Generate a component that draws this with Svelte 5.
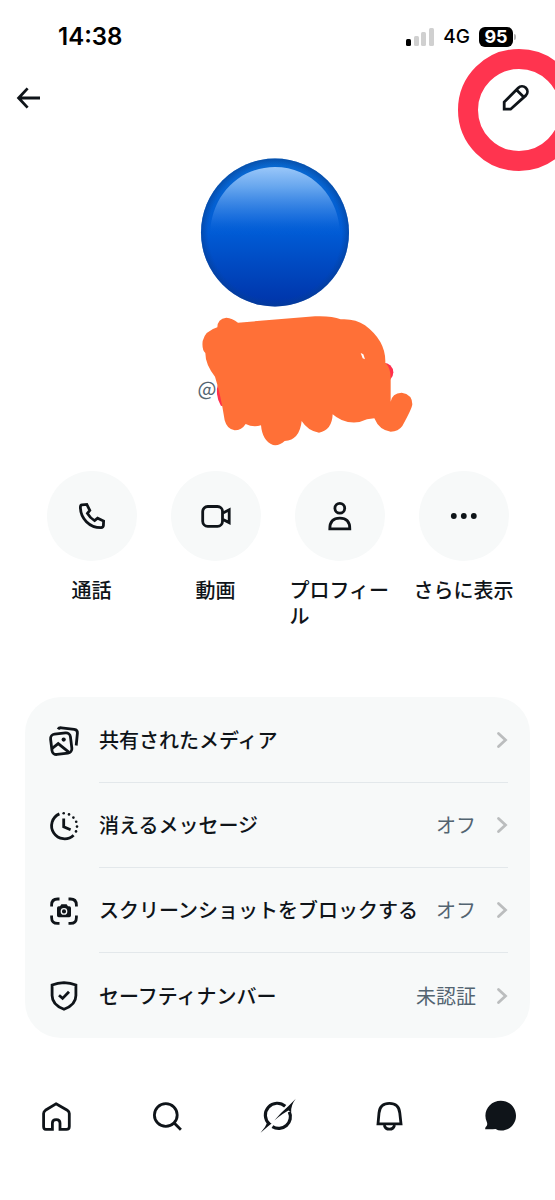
<script lang="ts">
  interface Action {
    icon: 'phone' | 'video' | 'person' | 'more';
    label: string;
  }

  interface Setting {
    icon: 'media' | 'timer' | 'screenshot' | 'shield';
    label: string;
    value?: string;
  }

  interface Tab {
    icon: 'home' | 'search' | 'grok' | 'bell' | 'chat';
    label: string;
  }

  const actions: Action[] = [
    { icon: 'phone', label: '通話' },
    { icon: 'video', label: '動画' },
    { icon: 'person', label: 'プロフィール' },
    { icon: 'more', label: 'さらに表示' }
  ];

  const settings: Setting[] = [
    { icon: 'media', label: '共有されたメディア' },
    { icon: 'timer', label: '消えるメッセージ', value: 'オフ' },
    { icon: 'screenshot', label: 'スクリーンショットをブロックする', value: 'オフ' },
    { icon: 'shield', label: 'セーフティナンバー', value: '未認証' }
  ];

  const tabs: Tab[] = [
    { icon: 'home', label: 'ホーム' },
    { icon: 'search', label: '検索' },
    { icon: 'grok', label: 'Grok' },
    { icon: 'bell', label: '通知' },
    { icon: 'chat', label: 'チャット' }
  ];
</script>

{#snippet icon(name: string)}
  <svg class="icon" viewBox="0 0 30 30" aria-hidden="true">
    {#if name === 'phone'}
      <path d="M5 3.8 L9.8 3.4 L12.8 9.4 L10.4 12.4 Q13 17 17.6 19.6 L20.6 17.2 L26.6 20 L26.4 24.7 Q26.2 26.6 24 26.7 C12.5 26.7 3.4 17.5 3.4 6 Q3.4 4 5 3.8 Z" />
    {:else if name === 'video'}
      <rect x="1.7" y="5.5" width="19.8" height="19.8" rx="5" />
      <path d="M22 12 L28.2 8.8 V21.6 L22 18.4" />
    {:else if name === 'person'}
      <circle cx="14.8" cy="7.2" r="4.9" />
      <path d="M4.8 27.8 C4.8 20.5 8.5 17.2 14.8 17.2 S24.8 20.5 24.8 27.8 Z" />
    {:else if name === 'more'}
      <g class="solid">
        <circle cx="4.8" cy="15" r="2.9" />
        <circle cx="14.8" cy="15" r="2.9" />
        <circle cx="24.8" cy="15" r="2.9" />
      </g>
    {:else if name === 'media'}
      <rect x="2.2" y="7.5" width="20" height="20.4" rx="4.5" transform="rotate(-7 12 17.5)" />
      <path d="M9 3.2 Q10 1.5 12.5 1.8 L25.2 3.3 Q28.7 3.8 28.4 7.2 L27.2 19.5" />
      <path d="M3.2 22.3 L9.2 17.6 L19.8 26.2" />
      <circle class="solid" cx="14.7" cy="13.6" r="2.1" />
    {:else if name === 'timer'}
      <path d="M10.4 2.9 A13 13 0 1 0 24.6 24.2" />
      <path d="M14.7 7.5 V15.8 L21.6 18.8" />
      <g class="solid">
        <circle cx="14.7" cy="2.2" r="1.3" />
        <circle cx="20" cy="3.4" r="1.3" />
        <circle cx="24.4" cy="6.6" r="1.3" />
        <circle cx="27.2" cy="10.8" r="1.3" />
        <circle cx="28" cy="15.6" r="1.3" />
        <circle cx="27" cy="20.4" r="1.3" />
      </g>
    {:else if name === 'screenshot'}
      <path d="M2.6 10.5 V9 Q2.6 3 8.6 3 H10.5 M19.5 3 H21.4 Q27.4 3 27.4 9 V10.5 M27.4 19.5 V21.4 Q27.4 27.4 21.4 27.4 H19.5 M10.5 27.4 H8.6 Q2.6 27.4 2.6 21.4 V19.5" />
      <path class="solid" d="M8 12 Q8 10.3 9.7 10.3 H11 L12.4 8.2 H17.6 L19 10.3 H20.3 Q22 10.3 22 12 V19.6 Q22 21.3 20.3 21.3 H9.7 Q8 21.3 8 19.6 Z" />
      <circle class="lens" cx="15" cy="15.4" r="2.7" />
    {:else if name === 'shield'}
      <path d="M15 1.6 Q21.5 1.8 26.9 4 V14.5 C26.9 21 22.5 25.5 15 28.2 C7.5 25.5 3.1 21 3.1 14.5 V4 Q8.5 1.8 15 1.6 Z" />
      <path d="M10 14.2 L13.6 17.4 L20 10.8" />
    {:else if name === 'home'}
      <path d="M15 2.8 L26.3 9.3 Q28.3 10.5 28.3 12.6 V25.4 Q28.3 28.3 25.4 28.3 H19 V22 Q19 18.6 15.2 18.6 T11.4 22 V28.3 H4.8 Q2.6 28.3 2.6 25.4 V12.6 Q2.6 10.5 4.4 9.3 Z" />
    {:else if name === 'search'}
      <circle cx="13.8" cy="14" r="11.4" />
      <path d="M22.2 22 L28.9 28.8" />
    {:else if name === 'grok'}
      <path class="ring-arc" d="M22.2 5.3 A11.7 11.7 0 0 0 6.3 23" />
      <path class="ring-arc" d="M26.3 10.8 A11.7 11.7 0 0 1 9.4 25.6" />
      <path class="solid" d="M32.8 -2.2 Q27.8 4 28.2 11 L25.4 9.6 Q20 12.4 11.3 19.4 Q18.5 11 25 5.5 Z" />
      <path class="solid" d="M-2.4 31.8 Q2.6 26.4 4.6 20.8 L8.6 22.4 Q4.6 25.4 -2.4 31.8 Z" />
    {:else if name === 'bell'}
      <path d="M4 22.8 L5 12 C5.6 5.5 9.6 2.4 15.4 2.4 S25.2 5.5 25.8 12 L27 22.8 Z" />
      <path d="M10.2 24 Q11.4 28.2 15.4 28.2 T20.6 24" />
    {:else if name === 'chat'}
      <path class="solid" d="M15.8 -0.3 C24.5 -0.3 31 6.4 31 14.8 S24.5 29.6 15.8 29.6 Q13 29.6 10.6 28 Q5.8 28.6 0.2 28.2 Q0 26.4 1.6 25 Q2.6 23.6 2 21.4 Q0.4 18.4 0.4 14.8 C0.4 6.4 7 -0.3 15.8 -0.3 Z" />
    {/if}
  </svg>
{/snippet}

<div class="screen">
  <div class="status-bar">
    <time>14:38</time>
    <div class="status-right">
      <svg class="signal" viewBox="0 0 28 18" aria-hidden="true">
        <rect x="0" y="11" width="5" height="7" rx="1.5" fill="#000" />
        <rect x="8" y="8" width="5" height="10" rx="1.5" />
        <rect x="15" y="4" width="5" height="14" rx="1.5" />
        <rect x="23" y="0" width="5" height="18" rx="1.5" />
      </svg>
      <span class="network">4G</span>
      <span class="battery">95</span>
    </div>
  </div>

  <header class="top-bar">
    <button class="icon-button" aria-label="戻る">
      <svg class="icon" viewBox="0 0 30 30" aria-hidden="true">
        <path d="M27 15 H5.6 M14.6 5.4 L5.6 15 L14.6 24.6" />
      </svg>
    </button>
    <button class="icon-button" aria-label="編集">
      <svg class="icon" viewBox="0 0 30 30" aria-hidden="true">
        <path d="M4.2 26.2 V19 L18.2 5 A5.3 5.3 0 0 1 25.9 12.4 L10.6 26.2 Z M16.6 7 L24 14.2" />
      </svg>
      <span class="highlight"></span>
    </button>
  </header>

  <main>
    <svg class="avatar" viewBox="1 0 152 150" role="img" aria-label="プロフィール画像">
      <defs>
        <linearGradient id="ball" x1="0" y1="0" x2="0" y2="1">
          <stop offset="0" stop-color="#0969cf" />
          <stop offset="0.5" stop-color="#005bd5" />
          <stop offset="1" stop-color="#0033a8" />
        </linearGradient>
        <radialGradient id="edge">
          <stop offset="0.9" stop-color="#06429c" stop-opacity="0" />
          <stop offset="1" stop-color="#063f91" stop-opacity="0.6" />
        </radialGradient>
        <linearGradient id="shine" x1="0" y1="0" x2="0" y2="1">
          <stop offset="0" stop-color="#9ac7f9" />
          <stop offset="0.3" stop-color="#65a5ee" />
          <stop offset="0.75" stop-color="#1c70df" stop-opacity="0.8" />
          <stop offset="1" stop-color="#005cd7" stop-opacity="0" />
        </linearGradient>
      </defs>
      <circle cx="74" cy="74.5" r="74" fill="url(#ball)" />
      <circle cx="74" cy="74.5" r="74" fill="url(#edge)" />
      <path d="M9 78 C9 38 38 9 74 9 S139 38 139 78 Z" fill="url(#shine)" />
    </svg>

    <div class="identity">
      <span class="handle">@</span>
      <svg class="scribble" viewBox="30 510 660 400" aria-hidden="true">
        <g fill="#ff2f4b">
          <circle cx="596" cy="684" r="29" />
          <path d="M100 715 Q88 750 108 785 L140 780 L120 700 Z" />
        </g>
        <path
          fill="#ff7037"
          d="M97 549 Q97 524 124 520 Q142 521 159 535 L390 516 Q440 514 467 525 Q510 522 540 543 Q603 590 601 655 Q617 670 617 700 V772 Q621 747 650 745 Q682 750 682 780 Q681 793 652 845 Q640 862 617 862 Q583 858 568 822 L546 825 Q510 843 470 827 Q454 820 443 810 Q441 858 402 865 Q369 860 350 830 Q344 887 299 890 Q284 905 264 902 Q232 890 228 843 Q204 850 182 839 Q170 858 149 858 Q126 855 119 828 Q107 750 90 697 Q61 660 61 626 Q50 617 53 590 Q60 560 97 549 Z"
        />
        <path fill="#fff" d="M527 626 L535 630 L540 645 L533 642 Z" />
      </svg>
    </div>

    <div class="actions">
      {#each actions as action (action.icon)}
        <button class="action">
          <span class="action-icon">{@render icon(action.icon)}</span>
          <span class="action-label">{action.label}</span>
        </button>
      {/each}
    </div>

    <div class="settings">
      {#each settings as setting (setting.icon)}
        <button class="setting">
          {@render icon(setting.icon)}
          <span class="setting-body">
            <span class="setting-label">{setting.label}</span>
            {#if setting.value}
              <span class="setting-value">{setting.value}</span>
            {/if}
            <svg class="chevron" viewBox="0 0 12 18" aria-hidden="true">
              <path d="M2.5 2.5 L9.5 9 L2.5 15.5" />
            </svg>
          </span>
        </button>
      {/each}
    </div>
  </main>

  <nav>
    {#each tabs as tab (tab.icon)}
      <a href="#{tab.icon}" aria-label={tab.label}>{@render icon(tab.icon)}</a>
    {/each}
  </nav>
</div>

<style>
  :global(body) {
    margin: 0;
    background: #fff;
  }

  .screen {
    min-height: 100vh;
    overflow-x: clip;
    background: #fff;
    color: #0f1419;
    font-family: 'Noto Sans CJK JP', sans-serif;
    font-size: 20px;
    line-height: 26px;
  }

  button {
    padding: 0;
    border: none;
    background: none;
    color: inherit;
    font: inherit;
    cursor: pointer;
  }

  .icon {
    display: block;
    flex: none;
    width: 30px;
    height: 30px;
    overflow: visible;
    fill: none;
    stroke: currentColor;
    stroke-width: 2.8;
  }

  .icon .solid {
    fill: currentColor;
    stroke: none;
  }

  .icon .lens {
    stroke: #f7f9f9;
    stroke-width: 1.3;
  }

  .icon .ring-arc {
    stroke-width: 3.2;
  }

  /* Status bar */
  .status-bar {
    display: flex;
    align-items: center;
    justify-content: space-between;
    height: 74px;
    padding: 0 42px 0 58px;
    color: #000;
    font-family: Inter, sans-serif;
  }

  time {
    font-size: 24px;
    font-weight: 600;
  }

  .status-right {
    display: flex;
    align-items: center;
    gap: 9px;
  }

  .signal {
    width: 28px;
    height: 18px;
    fill: #d0d0d0;
  }

  .network {
    font-size: 19px;
    font-weight: 500;
  }

  .battery {
    position: relative;
    width: 34px;
    border-radius: 6px;
    background: #000;
    color: #fff;
    font-size: 18px;
    font-weight: 700;
    line-height: 20px;
    text-align: center;
  }

  .battery::after {
    content: '';
    position: absolute;
    top: 7px;
    right: -3px;
    width: 2px;
    height: 6px;
    border-radius: 0 2px 2px 0;
    background: #b5b5b5;
  }

  /* Top bar */
  .top-bar {
    display: flex;
    align-items: center;
    justify-content: space-between;
    height: 48px;
    padding: 0 25px 0 13px;
  }

  .icon-button {
    position: relative;
  }

  .highlight {
    position: absolute;
    top: -34px;
    left: -42px;
    box-sizing: border-box;
    width: 122px;
    height: 122px;
    border: 20px solid #ff344f;
    border-radius: 50%;
    pointer-events: none;
  }

  main {
    display: flex;
    flex-direction: column;
    align-items: center;
    padding-top: 36px;
  }

  .avatar {
    width: 152px;
    height: 150px;
    overflow: visible;
  }

  .identity {
    position: relative;
    width: 160px;
    height: 130px;
    margin-top: 9px;
  }

  .handle {
    display: block;
    padding-top: 58px;
    color: #536471;
  }

  .scribble {
    position: absolute;
    top: -3px;
    left: -3px;
    width: 220px;
    height: 134px;
  }

  /* Round action buttons */
  .actions {
    display: flex;
    justify-content: center;
    gap: 24px;
    margin-top: 24px;
  }

  .action {
    display: flex;
    flex-direction: column;
    align-items: center;
    gap: 16px;
    width: 100px;
    text-align: left;
  }

  .action-icon {
    display: flex;
    align-items: center;
    justify-content: center;
    width: 90px;
    height: 90px;
    border-radius: 50%;
    background: #f7f9f9;
  }

  .action-label,
  .setting-label {
    font-weight: 500;
  }

  /* Settings card */
  .settings {
    align-self: stretch;
    margin: 68px 25px 0;
    padding-top: 1px;
    border-radius: 36px;
    background: #f7f9f9;
  }

  .setting {
    display: flex;
    align-items: center;
    gap: 20px;
    width: 100%;
    padding: 0 22px 0 24px;
    text-align: left;
  }

  .setting-body {
    display: flex;
    flex: 1;
    align-items: center;
    box-sizing: border-box;
    height: 85px;
  }

  .setting:not(:last-child) .setting-body {
    border-bottom: 1px solid #e3e8eb;
  }

  .setting-label {
    flex: 1;
    white-space: nowrap;
  }

  .setting-value {
    color: #536471;
  }

  .chevron {
    width: 12px;
    height: 18px;
    margin-left: 20px;
    fill: none;
    stroke: #bbbdbe;
    stroke-width: 2.8;
    stroke-linecap: round;
  }

  /* Bottom navigation */
  nav {
    display: grid;
    grid-template-columns: repeat(5, 1fr);
    margin-top: 48px;
  }

  nav a {
    display: flex;
    align-items: center;
    justify-content: center;
    height: 60px;
    color: inherit;
  }
</style>
